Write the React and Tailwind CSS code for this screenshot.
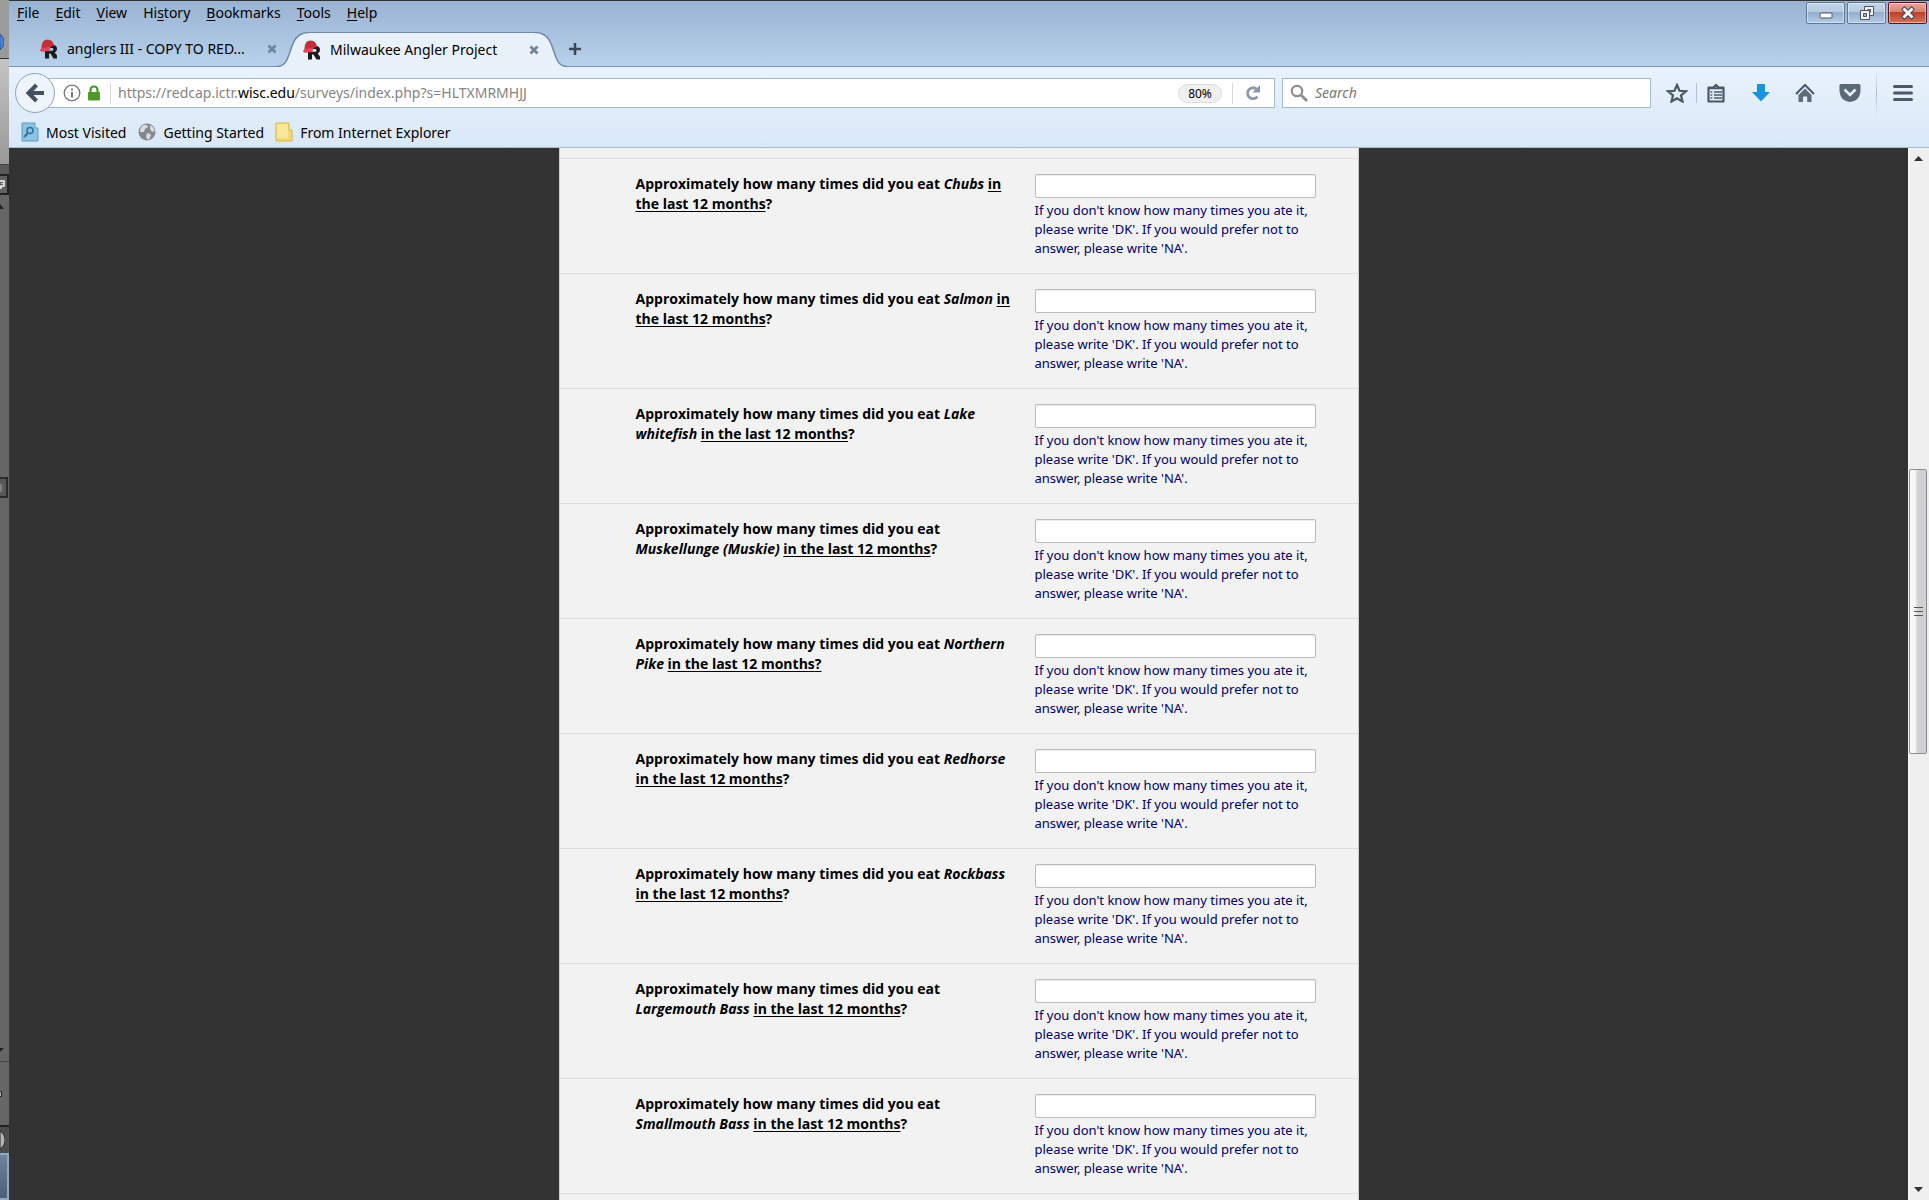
import React from "react";

const Key = ({ k, pre = "", post }) => (
  <button type="button" className="whitespace-nowrap">
    {pre}
    <span className="underline underline-offset-2">{k}</span>
    {post}
  </button>
);

const menus = [
  { k: "F", post: "ile" },
  { k: "E", post: "dit" },
  { k: "V", post: "iew" },
  { pre: "Hi", k: "s", post: "tory" },
  { k: "B", post: "ookmarks" },
  { k: "T", post: "ools" },
  { k: "H", post: "elp" },
];

const RedcapIcon = () => (
  <svg viewBox="0 0 18 20" className="h-5 w-[18px] shrink-0" aria-hidden="true">
    <path fillRule="evenodd" d="M5 6h8q4 0 4 4q0 2.700-2.300 3.500L17 16.500V19.500h-3.500l-3-5H9v5H5zM9 9v2.700h3.200q1.300 0 1.300-1.300T12.200 9z" fill="#1a1a1a" />
    <path d="M1.500 8.500Q1.800.500 7.500.500Q13 .500 14 6.500Q9 8 4.500 12.300Q1.500 13 0 11.300Q1.500 10 1.500 8.500z" fill="#c72c38" />
    <path d="M1.500 9Q6 8.500 10.500 7.500L9.500 12.300H4.500Q1.500 13 0 11.300Q1.500 10 1.500 9z" fill="#e0485a" />
  </svg>
);

const CloseX = () => (
  <svg viewBox="0 0 10 10" className="h-[10px] w-[10px]" aria-hidden="true">
    <path d="M1.500 1.500l7 7M8.500 1.500l-7 7" stroke="#71829a" strokeWidth="2.800" />
  </svg>
);

function Desktop() {
  return (
    <div className="flex w-[9px] shrink-0 flex-col overflow-hidden bg-[#666666]" aria-hidden="true">
      <div className="flex h-[58px] items-end bg-[#9b9b9b] pb-[7px]">
        <svg viewBox="0 0 4 18" className="h-[18px] w-1"><path d="M0 1Q4 4 4 9T0 17z" fill="#4c86dc" stroke="#2856a0" /></svg>
      </div>
      <div className="h-[106px] border-t border-[#333] bg-gradient-to-b from-[#c4c4c4] to-[#999]" />
      <div className="h-[10px] border-t border-[#444] bg-[#595959]" />
      <div className="flex h-[21px] items-center border-2 border-l-0 border-[#222] bg-[#606060]">
        <svg viewBox="0 0 5 10" className="h-[10px] w-[5px]"><path d="M0 1h4v5H1v2H0M2 3v1" stroke="#f4f6fb" strokeWidth="1.500" fill="none" /></svg>
      </div>
      <div className="h-[14px] pt-[9px]">
        <svg viewBox="0 0 4 5" className="h-[5px] w-1"><path d="M0 0l4 5H0z" fill="#222" /></svg>
      </div>
      <div className="h-[268px]" />
      <div className="flex h-[21px] w-2 items-center border-2 border-l-0 border-[#2b2b2b] bg-[#5a5a5a]">
        <svg viewBox="0 0 2 8" className="h-2 w-[2px] shrink-0"><path d="M0 1h2M0 3h2M0 5h2M0 7h2" stroke="#aaa" /></svg>
      </div>
      <div className="flex-1" />
      <svg viewBox="0 0 4 4" className="h-1 w-1 shrink-0"><path d="M0 0h4L0 4z" fill="#222" /></svg>
      <div className="mt-[9px] flex h-[64px] shrink-0 items-center border-t border-[#444] bg-[#666]">
        <svg viewBox="0 0 2 6" className="h-[6px] w-[2px]"><path d="M0 .500h1.500v5H0" stroke="#222" fill="#aaa" /></svg>
      </div>
      <div className="flex h-[28px] shrink-0 items-center border-t-2 border-[#222] bg-[#4d4d4d]">
        <svg viewBox="0 0 5 18" className="h-[18px] w-[5px]"><path d="M0 0Q5 3 5 9T0 18z" fill="#b5b5b5" stroke="#222" /></svg>
      </div>
      <div className="h-[47px] shrink-0 border-2 border-l-0 border-[#8fa8c6] bg-gradient-to-b from-[#71839a] to-[#4c5f78]" />
    </div>
  );
}

function WindowButtons() {
  const base = "flex h-[22px] w-[39px] items-center justify-center rounded-[2px] border shadow-[inset_0_0_0_1px_rgba(255,255,255,0.45)]";
  const blue = " border-[#5f7694] bg-[linear-gradient(#c3d4e9_0,#b6cae2_45%,#94aecb_46%,#b3cce6_100%)]";
  return (
    <div className="flex shrink-0 gap-[2px] pt-px pr-[2px]">
      <button type="button" aria-label="Minimize" className={base + blue}>
        <svg viewBox="0 0 14 14" className="h-[14px] w-[14px]"><rect x="1" y="7" width="12" height="5" rx="1" fill="#fff" stroke="#4b5262" /></svg>
      </button>
      <button type="button" aria-label="Restore" className={base + blue}>
        <svg viewBox="0 0 16 16" className="h-4 w-4">
          <path d="M5.500 1.500h9v9h-9z" fill="#f5f5f5" stroke="#4b5262" />
          <path d="M8.500 4.500h3v3" fill="none" stroke="#4b5262" />
          <path d="M1.500 5.500h9v9h-9z" fill="#f5f5f5" stroke="#4b5262" />
          <path d="M4.500 8.500h3v3h-3z" fill="#a5bad3" stroke="#4b5262" />
        </svg>
      </button>
      <button type="button" aria-label="Close window" className={base + " border-[#5a1420] bg-[linear-gradient(#e6a79b_0,#d9816f_45%,#bb3f28_46%,#d0755c_100%)]"}>
        <svg viewBox="0 0 16 16" className="h-4 w-4">
          <path d="M4.500 4.500l7 7M11.500 4.500l-7 7" stroke="#4a3f50" strokeWidth="5" strokeLinecap="square" />
          <path d="M4.500 4.500l7 7M11.500 4.500l-7 7" stroke="#f4f4f4" strokeWidth="3" strokeLinecap="square" />
        </svg>
      </button>
    </div>
  );
}

function TabBar() {
  return (
    <div className="flex h-9 items-end" role="tablist">
      <div className="flex h-9 w-[268px] items-center border-b border-[#7b93ae] pt-px pl-[31px]">
        <RedcapIcon />
        <button type="button" role="tab" aria-selected="false" className="ml-[9px] whitespace-nowrap">anglers III - COPY TO RED...</button>
        <button type="button" aria-label="Close tab" className="ml-auto"><CloseX /></button>
      </div>
      <svg viewBox="0 0 32 36" className="h-9 w-8 shrink-0" aria-hidden="true">
        <path d="M0 36C16 36 10 1.500 32 1.500V36z" fill="#e9f1fb" />
        <path d="M0 35.500C18 35.500 8 1.500 32 1.500" fill="none" stroke="#7189a8" strokeWidth="1.500" />
      </svg>
      <div className="z-10 flex h-[35px] w-[226px] items-center border-t border-[#7189a8] bg-[#e9f1fb]">
        <span className="-ml-[6px] flex"><RedcapIcon /></span>
        <button type="button" role="tab" aria-selected="true" className="ml-[9px] whitespace-nowrap">Milwaukee Angler Project</button>
        <button type="button" aria-label="Close tab" className="-mr-1 ml-auto"><CloseX /></button>
      </div>
      <svg viewBox="0 0 32 36" className="h-9 w-8 shrink-0" aria-hidden="true">
        <path d="M32 36C16 36 22 1.500 0 1.500V36z" fill="#e9f1fb" />
        <path d="M32 35.500C14 35.500 24 1.500 0 1.500" fill="none" stroke="#7189a8" strokeWidth="1.500" />
      </svg>
      <div className="flex h-9 flex-1 items-center border-b border-[#7b93ae]">
        <button type="button" aria-label="New tab" className="ml-px">
          <svg viewBox="0 0 14 14" className="h-[14px] w-[14px]"><path d="M7 1v12M1 7h12" stroke="#3a4756" strokeWidth="2.500" /></svg>
        </button>
      </div>
    </div>
  );
}

const toolBtn = "flex h-6 w-6 items-center justify-center";

function Toolbar() {
  return (
    <div className="flex h-[52px] items-center pl-[6px]">
      <button type="button" aria-label="Back" className="z-10 flex h-10 w-10 shrink-0 items-center justify-center rounded-full border border-[#8fa3bb] bg-[#edf4fc]">
        <svg viewBox="0 0 20 20" className="h-5 w-5"><path d="M19 10H5M11.500 2l-8 8 8 8" fill="none" stroke="#43505f" strokeWidth="4" /></svg>
      </button>
      <div className="-ml-4 flex h-[30px] flex-1 items-center border border-[#a5b8cf] bg-white pl-[23px]">
        <svg viewBox="0 0 18 18" className="h-[18px] w-[18px] shrink-0"><circle cx="9" cy="9" r="7.800" fill="none" stroke="#777" strokeWidth="1.300" /><path d="M9 8v5.500M9 4.500v2" stroke="#777" strokeWidth="2" /></svg>
        <svg viewBox="0 0 14 16" className="ml-[6px] h-4 w-[14px] shrink-0"><path d="M3.500 8V5Q3.500 1.500 7 1.500T10.500 5v3" fill="none" stroke="#4d9a26" strokeWidth="2.200" /><rect x="1" y="7" width="12" height="8.500" rx="1" fill="#4d9a26" /></svg>
        <span className="ml-[9px] h-[21px] w-px bg-[#d8d8d8]" />
        <div role="textbox" aria-label="Address" className="ml-[7px] flex-1 whitespace-nowrap text-[#858585]">
          https://redcap.ictr.<span className="text-black">wisc.edu</span>/surveys/index.php?s=HLTXMRMHJJ
        </div>
        <button type="button" className="h-[19px] w-11 rounded-full border border-[#dcdcdc] bg-[#f0f0f0] text-[12px] leading-[17px]">80%</button>
        <span className="ml-[10px] h-[21px] w-px bg-[#d8d8d8]" />
        <button type="button" aria-label="Reload" className="mr-[13px] ml-3">
          <svg viewBox="0 0 16 16" className="h-4 w-4"><path d="M12.500 11.500A5.500 5.500 0 1 1 11.500 4" fill="none" stroke="#8a99a8" strokeWidth="2.800" /><path d="M15 0v7.500H7.500z" fill="#8a99a8" /></svg>
        </button>
      </div>
      <div className="ml-[7px] flex h-[30px] w-[369px] items-center border border-[#a5b8cf] bg-white pl-[7px]">
        <svg viewBox="0 0 18 18" className="h-[18px] w-[18px] shrink-0"><circle cx="7" cy="7" r="5.200" fill="none" stroke="#8e8e8e" strokeWidth="2.200" /><path d="M11 11l6 6" stroke="#8e8e8e" strokeWidth="2.800" /></svg>
        <input aria-label="Search" placeholder="Search" className="ml-[7px] w-full bg-transparent outline-none placeholder:text-[#777] placeholder:italic" />
      </div>
      <div className="ml-[14px] flex h-full shrink-0 items-center">
        <button type="button" aria-label="Bookmark" className={toolBtn}>
          <svg viewBox="0 0 22 20" className="h-5 w-[22px]"><path d="M11 2l2.500 5.800 6.300.500-4.800 4 1.500 6.200L11 15.200 5.500 18.500 7 12.300l-4.800-4 6.300-.500z" fill="none" stroke="#4b5867" strokeWidth="2.200" /></svg>
        </button>
        <span className="mx-[7px] h-5 w-px bg-[#b4c1ce]" />
        <button type="button" aria-label="Bookmarks list" className={toolBtn}>
          <svg viewBox="0 0 20 20" className="h-5 w-5"><path d="M2.500 4.500H7.500L10 2l2.500 2.500h5v14h-15z" fill="#e4eefa" stroke="#4b5867" strokeWidth="2.200" strokeLinejoin="round" /><path d="M6.500 4.500L10 1l3.500 3.500z" fill="#4b5867" /><path d="M4.500 9h1.800M4.500 12h1.800M4.500 15h1.800M8 9h8M8 12h8M8 15h8M3 5.500h14" stroke="#4b5867" strokeWidth="1.500" /></svg>
        </button>
        <button type="button" aria-label="Downloads" className={toolBtn + " ml-[21px]"}>
          <svg viewBox="0 0 18 18" className="h-[18px] w-[18px]"><path d="M5 0h8v8h5l-9 9.500L0 8h5z" fill="#1894dc" /></svg>
        </button>
        <button type="button" aria-label="Home" className={toolBtn + " ml-5"}>
          <svg viewBox="0 0 20 20" className="h-5 w-5"><path d="M1 11l9-9 9 9" fill="none" stroke="#4b5867" strokeWidth="2" /><path d="M3.500 12L10 5.500 16.500 12v7h-4.300v-5.500H8V19H3.500z" fill="#5f6c7b" /></svg>
        </button>
        <button type="button" aria-label="Pocket" className={toolBtn + " ml-[21px]"}>
          <svg viewBox="0 0 22 20" className="h-5 w-[22px]"><path d="M2 1h18q1.500 0 1.500 1.500V8.500Q20.500 18 11 19Q1.500 18 .500 8.500V2.500Q.500 1 2 1z" fill="#5b6877" /><path d="M5.500 6.500l5.500 5.500 5.500-5.500" fill="none" stroke="#e9f1fb" strokeWidth="2.600" /></svg>
        </button>
        <span className="ml-[14px] h-[48px] w-px bg-gradient-to-b from-transparent via-[#aebdce] to-transparent" />
        <button type="button" aria-label="Menu" className="mr-4 ml-4">
          <svg viewBox="0 0 20 18" className="h-[18px] w-5"><path d="M1.500 2.500h17M1.500 9h17M1.500 15.500h17" stroke="#4b5867" strokeWidth="3" strokeLinecap="round" /></svg>
        </button>
      </div>
    </div>
  );
}

function Bookmarks() {
  return (
    <div className="flex h-[29px] items-center border-b border-[#a9bbd2] pl-3">
      <a href="#most" className="flex items-center whitespace-nowrap">
        <svg viewBox="0 0 18 20" className="mr-[7px] -mt-[3px] h-5 w-[18px]"><path d="M1 1h13v5h3v13H1z" fill="#8fc3e2" stroke="#5a9cc6" /><circle cx="9" cy="8.500" r="3" fill="none" stroke="#2f719f" strokeWidth="1.600" /><path d="M7 11l-4 4" stroke="#2f719f" strokeWidth="2" /></svg>
        Most Visited
      </a>
      <a href="#start" className="ml-3 flex items-center whitespace-nowrap">
        <svg viewBox="0 0 18 18" className="mr-[7px] -mt-[3px] h-[18px] w-[18px]"><circle cx="9" cy="9" r="8.500" fill="#84878c" /><path d="M4 3q3-2 5-1l1 2-3 2-1 3-4 0q0-4 2-6zM12 2q4 2 5 6l-3 1-2-3zM9 10l4 1-1 4-2 2-2-3z" fill="#d7dade" /></svg>
        Getting Started
      </a>
      <a href="#ie" className="ml-[11px] flex items-center whitespace-nowrap">
        <svg viewBox="0 0 18 20" className="mr-[7px] -mt-[3px] h-5 w-[18px]"><path d="M1 1h13v7h3v11H1z" fill="#f3d976" stroke="#d9b845" /><path d="M2 2h11v14H2z" fill="#f9e89c" /></svg>
        From Internet Explorer
      </a>
    </div>
  );
}

const fish = [
  { name: "Chubs" },
  { name: "Salmon" },
  { name: "Lake whitefish" },
  { name: "Muskellunge (Muskie)" },
  { name: "Northern Pike", all: true },
  { name: "Redhorse" },
  { name: "Rockbass" },
  { name: "Largemouth Bass" },
  { name: "Smallmouth Bass" },
];

function Question({ name, all, id }) {
  return (
    <div className="flex h-[115px] border-t border-[#dddddd] pt-[15px] pl-[76px]">
      <label htmlFor={id} className="w-[399px] shrink-0 pr-5 text-[14px] leading-5 font-bold text-black">
        Approximately how many times did you eat <em>{name}</em>{" "}
        <span className="underline underline-offset-2">in the last 12 months{all ? "?" : ""}</span>
        {all ? "" : "?"}
      </label>
      <div className="w-[281px]">
        <input id={id} type="text" className="block h-6 w-full rounded-[2px] border border-[#bbbbbb] bg-white px-1 text-[13px] shadow-[inset_0_1px_1px_rgba(0,0,0,0.08)]" />
        <p className="mt-[3px] font-['Noto_Sans',sans-serif] text-[13px] leading-[19px] text-[#000066]">
          If you don't know how many times you ate it, please write 'DK'. If you would prefer not to answer, please write 'NA'.
        </p>
      </div>
    </div>
  );
}

export default function App() {
  return (
    <div className="flex h-screen w-full overflow-hidden font-['Open_Sans',sans-serif] text-black">
      <Desktop />
      <div className="flex min-w-0 flex-1 flex-col border-t border-[#333]">
        <header className="shrink-0 font-['Noto_Sans',sans-serif] text-[14px] leading-5">
          <div className="bg-gradient-to-b from-[#99b3d2] to-[#b8d1ec]">
            <div className="flex h-[30px] items-start justify-between">
              <nav className="flex gap-4 pt-[2px] pl-2">
                {menus.map((m) => <Key key={m.post} {...m} />)}
              </nav>
              <WindowButtons />
            </div>
            <TabBar />
          </div>
          <div className="bg-gradient-to-b from-[#e9f2fc] to-[#d9e8f8]">
            <Toolbar />
            <Bookmarks />
          </div>
        </header>
        <div className="flex min-h-0 flex-1 bg-[#333333]">
          <main className="min-w-0 flex-1 overflow-hidden">
            <form className="mx-auto max-w-[800px] border-x border-[#cccccc] bg-[#f2f2f2] pt-[10px]">
              {fish.map((f, i) => <Question key={f.name} id={"fish" + i} {...f} />)}
              <div className="h-10 border-t border-[#dddddd]" />
            </form>
          </main>
          <div className="flex w-[21px] shrink-0 flex-col items-center border-l border-[#fafafa] bg-[#efefef] pr-[2px]" aria-hidden="true">
            <svg viewBox="0 0 9 5" className="mt-2 h-[5px] w-[9px] shrink-0"><path d="M0 5l4.500-5L9 5z" fill="#333" /></svg>
            <div className="mt-[308px] flex h-[285px] w-[18px] shrink-0 flex-col items-center justify-center gap-[3px] rounded-[2px] border border-[#8d8d8d] bg-gradient-to-r from-[#f8f8f8] from-30% to-[#cfd1d4] to-50%">
              <span className="h-px w-[9px] bg-[#555]" />
              <span className="h-px w-[9px] bg-[#555]" />
              <span className="h-px w-[9px] bg-[#555]" />
            </div>
            <svg viewBox="0 0 9 5" className="mt-auto mb-2 h-[5px] w-[9px] shrink-0"><path d="M0 0l4.500 5L9 0z" fill="#333" /></svg>
          </div>
        </div>
      </div>
    </div>
  );
}
